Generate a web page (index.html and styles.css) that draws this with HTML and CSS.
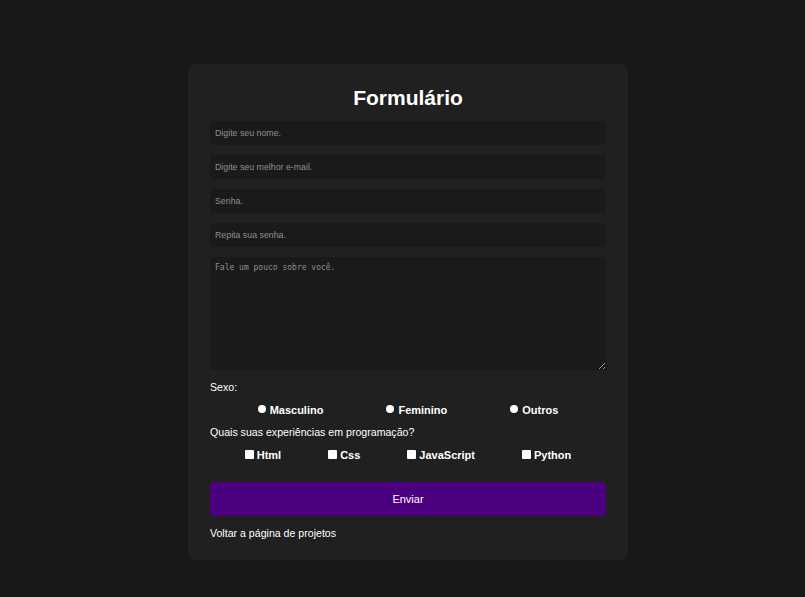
FILE: index.html
```html
<!DOCTYPE html>
<html lang="pt-BR">
<head>
<meta charset="utf-8">
<title>Formulário</title>
<link rel="stylesheet" href="styles.css">
</head>
<body>
<main class="page">
  <form class="card">
    <h1 class="title">Formulário</h1>
    <input class="field" type="text" placeholder="Digite seu nome.">
    <input class="field" type="email" placeholder="Digite seu melhor e-mail.">
    <input class="field" type="password" placeholder="Senha.">
    <input class="field" type="password" placeholder="Repita sua senha.">
    <textarea class="area" placeholder="Fale um pouco sobre você."></textarea>
    <p class="label label-first">Sexo:</p>
    <div class="options options-radio">
      <label class="opt"><input class="radio" type="radio" name="sexo">Masculino</label>
      <label class="opt"><input class="radio" type="radio" name="sexo">Feminino</label>
      <label class="opt"><input class="radio" type="radio" name="sexo">Outros</label>
    </div>
    <p class="label">Quais suas experiências em programação?</p>
    <div class="options options-check">
      <label class="opt"><input class="check" type="checkbox">Html</label>
      <label class="opt"><input class="check" type="checkbox">Css</label>
      <label class="opt"><input class="check" type="checkbox">JavaScript</label>
      <label class="opt"><input class="check" type="checkbox">Python</label>
    </div>
    <button class="submit" type="button">Enviar</button>
    <a class="back" href="#">Voltar a página de projetos</a>
  </form>
</main>
</body>
</html>
```
FILE: styles.css
```css
* { box-sizing: border-box; }
html, body {
  margin: 0;
  background: #181818;
  font-family: "Liberation Sans", Arial, sans-serif;
  color: #fff;
}
.page {
  display: flex;
  justify-content: center;
  align-items: flex-start;
  padding: 64px 0 0 11px;
  min-height: 597px;
}
.card {
  width: 440px;
  background: #202020;
  border-radius: 6px;
  padding: 22px 22px 20px;
  display: flex;
  flex-direction: column;
}
.title {
  margin: 0 0 11px;
  text-align: center;
  font-size: 21px;
  font-weight: bold;
  line-height: 24px;
}
.field {
  height: 24px;
  margin: 0 0 10px;
  border: none;
  border-radius: 4px;
  background: #1a1a1a;
  color: #ddd;
  padding: 0 5px;
  font-family: "Liberation Sans", Arial, sans-serif;
  font-size: 8.8px;
  outline: none;
}
.field::placeholder { color: #8f8f8f; }
.area {
  height: 113px;
  margin: 0;
  border: none;
  border-radius: 4px;
  background: #1a1a1a;
  color: #ddd;
  padding: 6px 5px;
  font-family: "DejaVu Sans Mono", monospace;
  font-size: 8px;
  resize: vertical;
  outline: none;
}
.area::placeholder { color: #8f8f8f; }
.label {
  margin: 7px 0 0;
  font-size: 10.6px;
  line-height: 14px;
}
.label-first { margin-top: 10px; }
.options {
  display: flex;
  justify-content: center;
  font-size: 11px;
  font-weight: bold;
  line-height: 14px;
}
.options-radio { gap: 63px; margin-top: 9px; margin-bottom: 1px; }
.options-check { gap: 47px; margin-top: 9px; }
.opt {
  display: flex;
  align-items: center;
}
.radio, .check {
  appearance: none;
  -webkit-appearance: none;
  width: 8px;
  height: 8px;
  margin: 0 4px 3px 0;
  background: #fff;
  border: none;
}
.radio { border-radius: 50%; }
.check { width: 9px; height: 9px; border-radius: 1px; margin: 0 3px 1px 0; }
.submit {
  margin-top: 20px;
  height: 34px;
  border: none;
  border-radius: 4px;
  background: #4b0082;
  color: #fff;
  font-family: "Liberation Sans", Arial, sans-serif;
  font-size: 11px;
}
.back {
  margin-top: 10px;
  color: #fff;
  text-decoration: none;
  font-size: 10.6px;
  line-height: 14px;
  align-self: flex-start;
}
```
